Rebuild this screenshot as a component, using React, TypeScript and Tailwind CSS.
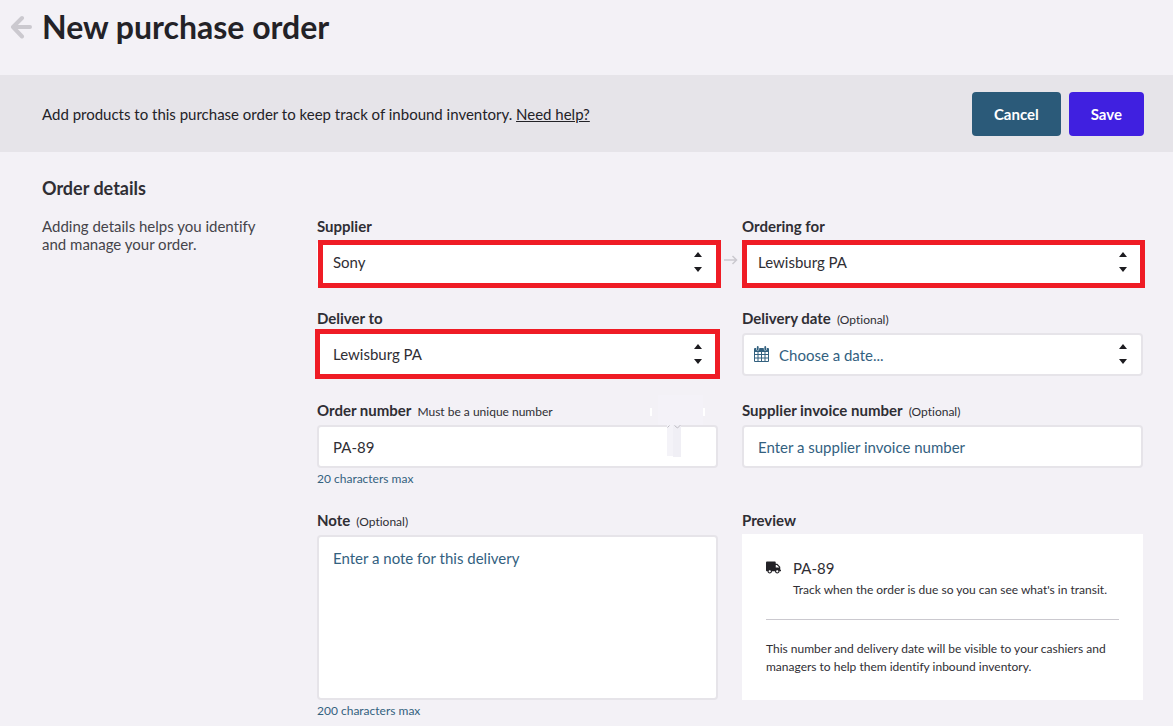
import React from "react";
import { FaTruck } from "react-icons/fa";
import { clsx } from "clsx";

const locations = ["Lewisburg PA", "Main Outlet"];
const suppliers = ["Sony", "Canon"];

const fieldClass =
  "block w-full rounded-[4px] border-2 bg-white px-3.5 text-[15px] text-[#2f2e34] outline-none placeholder:text-[#33617f] placeholder:opacity-100";

const Label = ({
  htmlFor,
  hint,
  children,
}: {
  htmlFor: string;
  hint?: string;
  children: React.ReactNode;
}) => (
  <label
    htmlFor={htmlFor}
    className="mb-1.5 block leading-[18px] font-bold text-[#2f2e34]"
  >
    {children}
    {hint && (
      <span className="ml-1.5 text-xs leading-none font-normal">{hint}</span>
    )}
  </label>
);

const Helper = ({ children }: { children: React.ReactNode }) => (
  <p className="pt-1 text-xs leading-[14px] text-[#33617f]">{children}</p>
);

const Stepper = () => (
  <svg
    viewBox="0 0 8 20"
    className="pointer-events-none absolute top-[11px] right-4 h-5 w-2 fill-[#1d1c20]"
    aria-hidden="true"
  >
    <path d="M4 0 8 5H0zM4 20 0 15h8z" />
  </svg>
);

const Highlight = ({ className }: { className: string }) => (
  <div
    className={clsx(
      "pointer-events-none absolute border-[5px] border-[#ef1c25]",
      className,
    )}
  />
);

const SelectField = ({
  id,
  label,
  options,
  highlight,
  children,
}: {
  id: string;
  label: string;
  options: string[];
  highlight: string;
  children?: React.ReactNode;
}) => (
  <div>
    <Label htmlFor={id}>{label}</Label>
    <div className="relative">
      <select
        id={id}
        className={clsx(fieldClass, "h-[43px] appearance-none border-white")}
      >
        {options.map((option) => (
          <option key={option}>{option}</option>
        ))}
      </select>
      <Stepper />
      <Highlight className={highlight} />
      {children}
    </div>
  </div>
);

const BackIcon = () => (
  <svg
    viewBox="0 0 24 24"
    className="size-6 fill-none stroke-[#cbc9cf] stroke-[4]"
    strokeLinecap="round"
    strokeLinejoin="round"
    aria-hidden="true"
  >
    <path d="M12 3 3 12l9 9.500M4 12h16" />
  </svg>
);

const CalendarIcon = () => (
  <svg
    viewBox="0 0 15 16"
    className="pointer-events-none absolute top-[13px] left-3 h-4 w-[15px]"
    aria-hidden="true"
  >
    <path
      fill="#33617f"
      d="M1 2h13a1 1 0 0 1 1 1v12a1 1 0 0 1-1 1H1a1 1 0 0 1-1-1V3a1 1 0 0 1 1-1z"
    />
    <path
      fill="#fff"
      d="M1 6h2.500v2H1zM4.500 6H7v2H4.500zM8 6h2.500v2H8zM11.500 6H14v2h-2.500zM1 9h2.500v2.500H1zM4.500 9H7v2.500H4.500zM8 9h2.500v2.500H8zM11.500 9H14v2.500h-2.500zM1 12.500h2.500V15H1zM4.500 12.500H7V15H4.500zM8 12.500h2.500V15H8zM11.500 12.500H14V15h-2.500z"
    />
    <path
      stroke="#fff"
      strokeWidth="3"
      strokeLinecap="round"
      d="M3.750 1.500v1.500M11.250 1.500v1.500"
    />
    <path
      stroke="#33617f"
      strokeWidth="1.800"
      strokeLinecap="round"
      d="M3.750 1v2.300M11.250 1v2.300"
    />
  </svg>
);

const ArrowIcon = () => (
  <svg
    viewBox="0 0 14 10"
    className="absolute top-3.5 -right-5 h-2.5 w-3.5 fill-none stroke-[#cbc9cf] stroke-[1.5]"
    aria-hidden="true"
  >
    <path d="M0 5h12M8.500 1l4 4-4 4" />
  </svg>
);

// faint marks over the top edge of the order number box
const Marks = () => (
  <svg
    viewBox="0 0 56 62"
    className="pointer-events-none absolute -top-[30px] right-3 h-[62px] w-14"
    aria-hidden="true"
  >
    <path fill="#f4f2f8" d="M8 0h45v30H8z" />
    <path fill="#fff" d="M0 13h2v8H0zM53 13h2v8h-2z" />
    <path fill="#f4f3f8" d="M17 30h6v31h-6z" />
    <path fill="#f0eff5" d="M23 30h8v32h-8z" />
    <path
      fill="none"
      stroke="#bdbbc2"
      d="M17.500 32.500l2-2M24.500 30.500l3 2.500 3-3"
    />
  </svg>
);

const App = () => {
  return (
    <div className="min-h-screen bg-[#f3f1f6] font-['Lato',sans-serif] text-[15px] text-[#2f2e34] [font-variant-ligatures:none]">
      <header className="flex h-[75px] items-start gap-2 pt-[7px] pl-2.5">
        <a href="#back" aria-label="Back" className="mt-2">
          <BackIcon />
        </a>
        <h1 className="text-[32px] leading-10 font-bold text-[#232227]">
          New purchase order
        </h1>
      </header>

      <div className="flex items-center justify-between bg-[#e6e4e9] pt-[17px] pr-[29px] pb-4 pl-[42px]">
        <p className="text-[#232227]">
          Add products to this purchase order to keep track of inbound
          inventory.{" "}
          <a href="#help" className="underline">
            Need help?
          </a>
        </p>
        <div className="flex gap-2 font-bold text-white">
          <button
            type="button"
            className="h-11 rounded-[4px] bg-[#2b5a79] px-[22px]"
          >
            Cancel
          </button>
          <button
            type="submit"
            form="order"
            className="h-11 rounded-[4px] bg-[#4020e0] px-[22px]"
          >
            Save
          </button>
        </div>
      </div>

      <main className="pt-6 pr-[30px] pl-[42px]">
        <h2 className="text-lg leading-6 font-bold text-[#2f2e34]">
          Order details
        </h2>
        <div className="flex pt-[17px]">
          <p className="w-[275px] pr-12 leading-[18px] text-[#45444a]">
            Adding details helps you identify and manage your order.
          </p>
          <form
            id="order"
            className="grid flex-1 grid-cols-2 gap-x-6 gap-y-[25px]"
            onSubmit={(e) => e.preventDefault()}
          >
            <SelectField
              id="supplier"
              label="Supplier"
              options={suppliers}
              highlight="-top-px left-px -right-[3px] -bottom-1"
            >
              <ArrowIcon />
            </SelectField>
            <SelectField
              id="outlet"
              label="Ordering for"
              options={locations}
              highlight="-top-px left-0 -right-0.5 -bottom-1"
            />
            <SelectField
              id="deliver"
              label="Deliver to"
              options={locations}
              highlight="-top-1 -left-0.5 -right-0.5 -bottom-[3px]"
            />
            <div>
              <Label htmlFor="date" hint="(Optional)">
                Delivery date
              </Label>
              <div className="relative">
                <input
                  id="date"
                  placeholder="Choose a date..."
                  className={clsx(
                    fieldClass,
                    "h-[43px] border-[#e6e4e9] pl-[35px]",
                  )}
                />
                <CalendarIcon />
                <Stepper />
              </div>
            </div>
            <div>
              <Label htmlFor="number" hint="Must be a unique number">
                Order number
              </Label>
              <div className="relative">
                <input
                  id="number"
                  defaultValue="PA-89"
                  maxLength={20}
                  className={clsx(fieldClass, "h-[43px] border-[#e6e4e9]")}
                />
                <Marks />
              </div>
              <Helper>20 characters max</Helper>
            </div>
            <div>
              <Label htmlFor="invoice" hint="(Optional)">
                Supplier invoice number
              </Label>
              <input
                id="invoice"
                placeholder="Enter a supplier invoice number"
                className={clsx(fieldClass, "h-[43px] border-[#e6e4e9]")}
              />
            </div>
            <div>
              <Label htmlFor="note" hint="(Optional)">
                Note
              </Label>
              <textarea
                id="note"
                placeholder="Enter a note for this delivery"
                maxLength={200}
                className={clsx(
                  fieldClass,
                  "h-[165px] resize-none border-[#e6e4e9] py-2.5",
                )}
              />
              <Helper>200 characters max</Helper>
            </div>
            <section>
              <h3 className="mb-[5px] leading-[18px] font-bold">Preview</h3>
              <div className="bg-white p-6 text-xs leading-[18px]">
                <div className="flex gap-3 border-b border-[#cbc9cf] pb-5">
                  <FaTruck className="mt-0.5 size-[15px] shrink-0 text-[#232227]" />
                  <div>
                    <p className="mb-[3px] text-[15px] leading-5">PA-89</p>
                    <p>
                      Track when the order is due so you can see what's in
                      transit.
                    </p>
                  </div>
                </div>
                <p className="pt-5">
                  This number and delivery date will be visible to your cashiers
                  and managers to help them identify inbound inventory.
                </p>
              </div>
            </section>
          </form>
        </div>
      </main>
    </div>
  );
};

export default App;
